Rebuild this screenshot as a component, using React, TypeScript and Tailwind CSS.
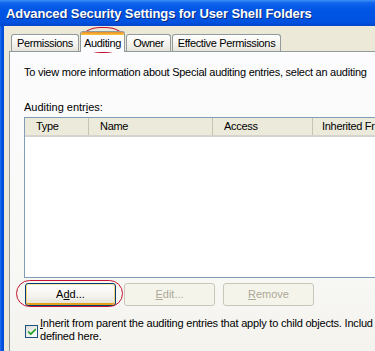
import { Check } from 'lucide-react'

const tabBase =
  'h-[17px] flex items-center justify-center border border-b-0 border-[#919b9c] rounded-t-[3px] bg-[linear-gradient(to_bottom,#ffffff,#f3f2ed_60%,#e6e4da)] tracking-[-0.35px]'

function Tab({ label, w }: { label: string; w: string }) {
  return <div className={`${tabBase} ${w}`}>{label}</div>
}

function HeaderCell({ label, w, last }: { label: string; w: string; last?: boolean }) {
  return (
    <div className={`h-full shrink-0 flex items-center tracking-[-0.3px] ${w} ${last ? 'pl-[9px]' : 'pl-[11px] border-r border-[#c7c5b2]'}`}>
      <span className="whitespace-nowrap">{label}</span>
    </div>
  )
}

export default function App() {
  return (
    <div className="relative w-[375px] h-[351px] overflow-hidden bg-[#ece9d8] text-[11px] leading-[13px] text-black font-['Liberation_Sans',Arial,sans-serif]">
      {/* Title bar */}
      <div className="h-[26px] flex items-center pl-[6px] bg-[linear-gradient(to_bottom,#3d8ff7_0px,#0f63ec_3px,#0055e6_10px,#0052e0_22px,#0046cc)]">
        <span className="text-white font-bold text-[13px] tracking-[-0.1px] whitespace-nowrap [text-shadow:1px_1px_0_#0a2a7a]">
          Advanced Security Settings for User Shell Folders
        </span>
      </div>

      <div className="flex h-[325px]">
        {/* Window frame */}
        <div className="w-[4px] shrink-0 bg-[linear-gradient(to_right,#2a73f0,#0055e6_40%,#0048d0)]" />

        <div className="flex-1 flex flex-col min-w-0">
          {/* Tab strip */}
          <div className="flex items-end gap-[1px] pl-[7px] pt-[5px] h-[25px]">
            <Tab label="Permissions" w="w-[68px]" />
            <div className="relative z-10 -mb-px w-[45px] h-[21px] flex flex-col border border-b-0 border-[#919b9c] rounded-t-[3px] bg-[#fcfcfe] overflow-hidden tracking-[-0.35px]">
              <div className="h-[3px] shrink-0 bg-[linear-gradient(to_bottom,#e68b2c,#ffc73c)]" />
              <div className="flex-1 flex items-center justify-center">Auditing</div>
            </div>
            <Tab label="Owner" w="w-[45px]" />
            <Tab label="Effective Permissions" w="w-[109px]" />
          </div>

          {/* Panel */}
          <div className="ml-[5px] flex-1 border-t border-l border-[#919b9c] bg-[linear-gradient(to_bottom,#fcfcfe,#f8f8f5_70%,#f4f3ee)] pl-[14px] pt-[14px]">
            <p className="whitespace-nowrap tracking-[-0.25px]">
              To view more information about Special auditing entries, select an auditing
            </p>

            <p className="mt-[22px] whitespace-nowrap">
              Auditing entr<span className="underline">i</span>es:
            </p>

            {/* List view */}
            <div className="mt-[3px] h-[161px] border border-r-0 border-[#7f9db9] bg-white">
              <div className="h-[19px] flex bg-[#ebeadb] border-b-2 border-[#d6d3ce]">
                <HeaderCell label="Type" w="w-[64px]" />
                <HeaderCell label="Name" w="w-[124px]" />
                <HeaderCell label="Access" w="w-[100px]" />
                <HeaderCell label="Inherited Fr" w="flex-1" last />
              </div>
            </div>

            {/* Buttons */}
            <div className="mt-[5px] ml-px flex gap-[8px]">
              <button className="w-[91px] h-[23px] rounded-[3px] border border-[#003c74] bg-[linear-gradient(to_bottom,#ffffff,#f3f2ec_60%,#e3dfd2)] shadow-[inset_0_1px_0_#ffe8a5,inset_1px_0_0_#fcd27b,inset_-1px_0_0_#fcd27b,inset_0_-2px_0_#e5a01a]">
                A<span className="underline">d</span>d...
              </button>
              <button className="w-[91px] h-[23px] rounded-[3px] border border-[#c9c7ba] bg-[#f5f4ea] text-[#aca899]">
                <span className="underline">E</span>dit...
              </button>
              <button className="w-[91px] h-[23px] rounded-[3px] border border-[#c9c7ba] bg-[#f5f4ea] text-[#aca899]">
                <span className="underline">R</span>emove
              </button>
            </div>

            {/* Inherit checkbox */}
            <div className="mt-[11px] ml-px flex gap-[2px]">
              <div className="mt-[8px] w-[13px] h-[13px] shrink-0 border border-[#1c5180] bg-[linear-gradient(135deg,#dcdcd7,#ffffff)] flex items-center justify-center">
                <Check className="w-[10px] h-[10px] text-[#21a121]" strokeWidth={4} />
              </div>
              <p className="whitespace-nowrap tracking-[-0.2px]">
                <span className="underline">I</span>nherit from parent the auditing entries that apply to child objects. Includ
                <br />
                defined here.
              </p>
            </div>
          </div>
        </div>
      </div>

      {/* Red annotation marks */}
      <div className="absolute left-[81px] top-[27px] w-[44px] h-[26px] rounded-[45%] border border-[#c4122f] pointer-events-none" />
      <div className="absolute left-[16px] top-[280px] w-[107px] h-[27px] rounded-[14px] border border-[#c4122f] pointer-events-none" />
    </div>
  )
}
